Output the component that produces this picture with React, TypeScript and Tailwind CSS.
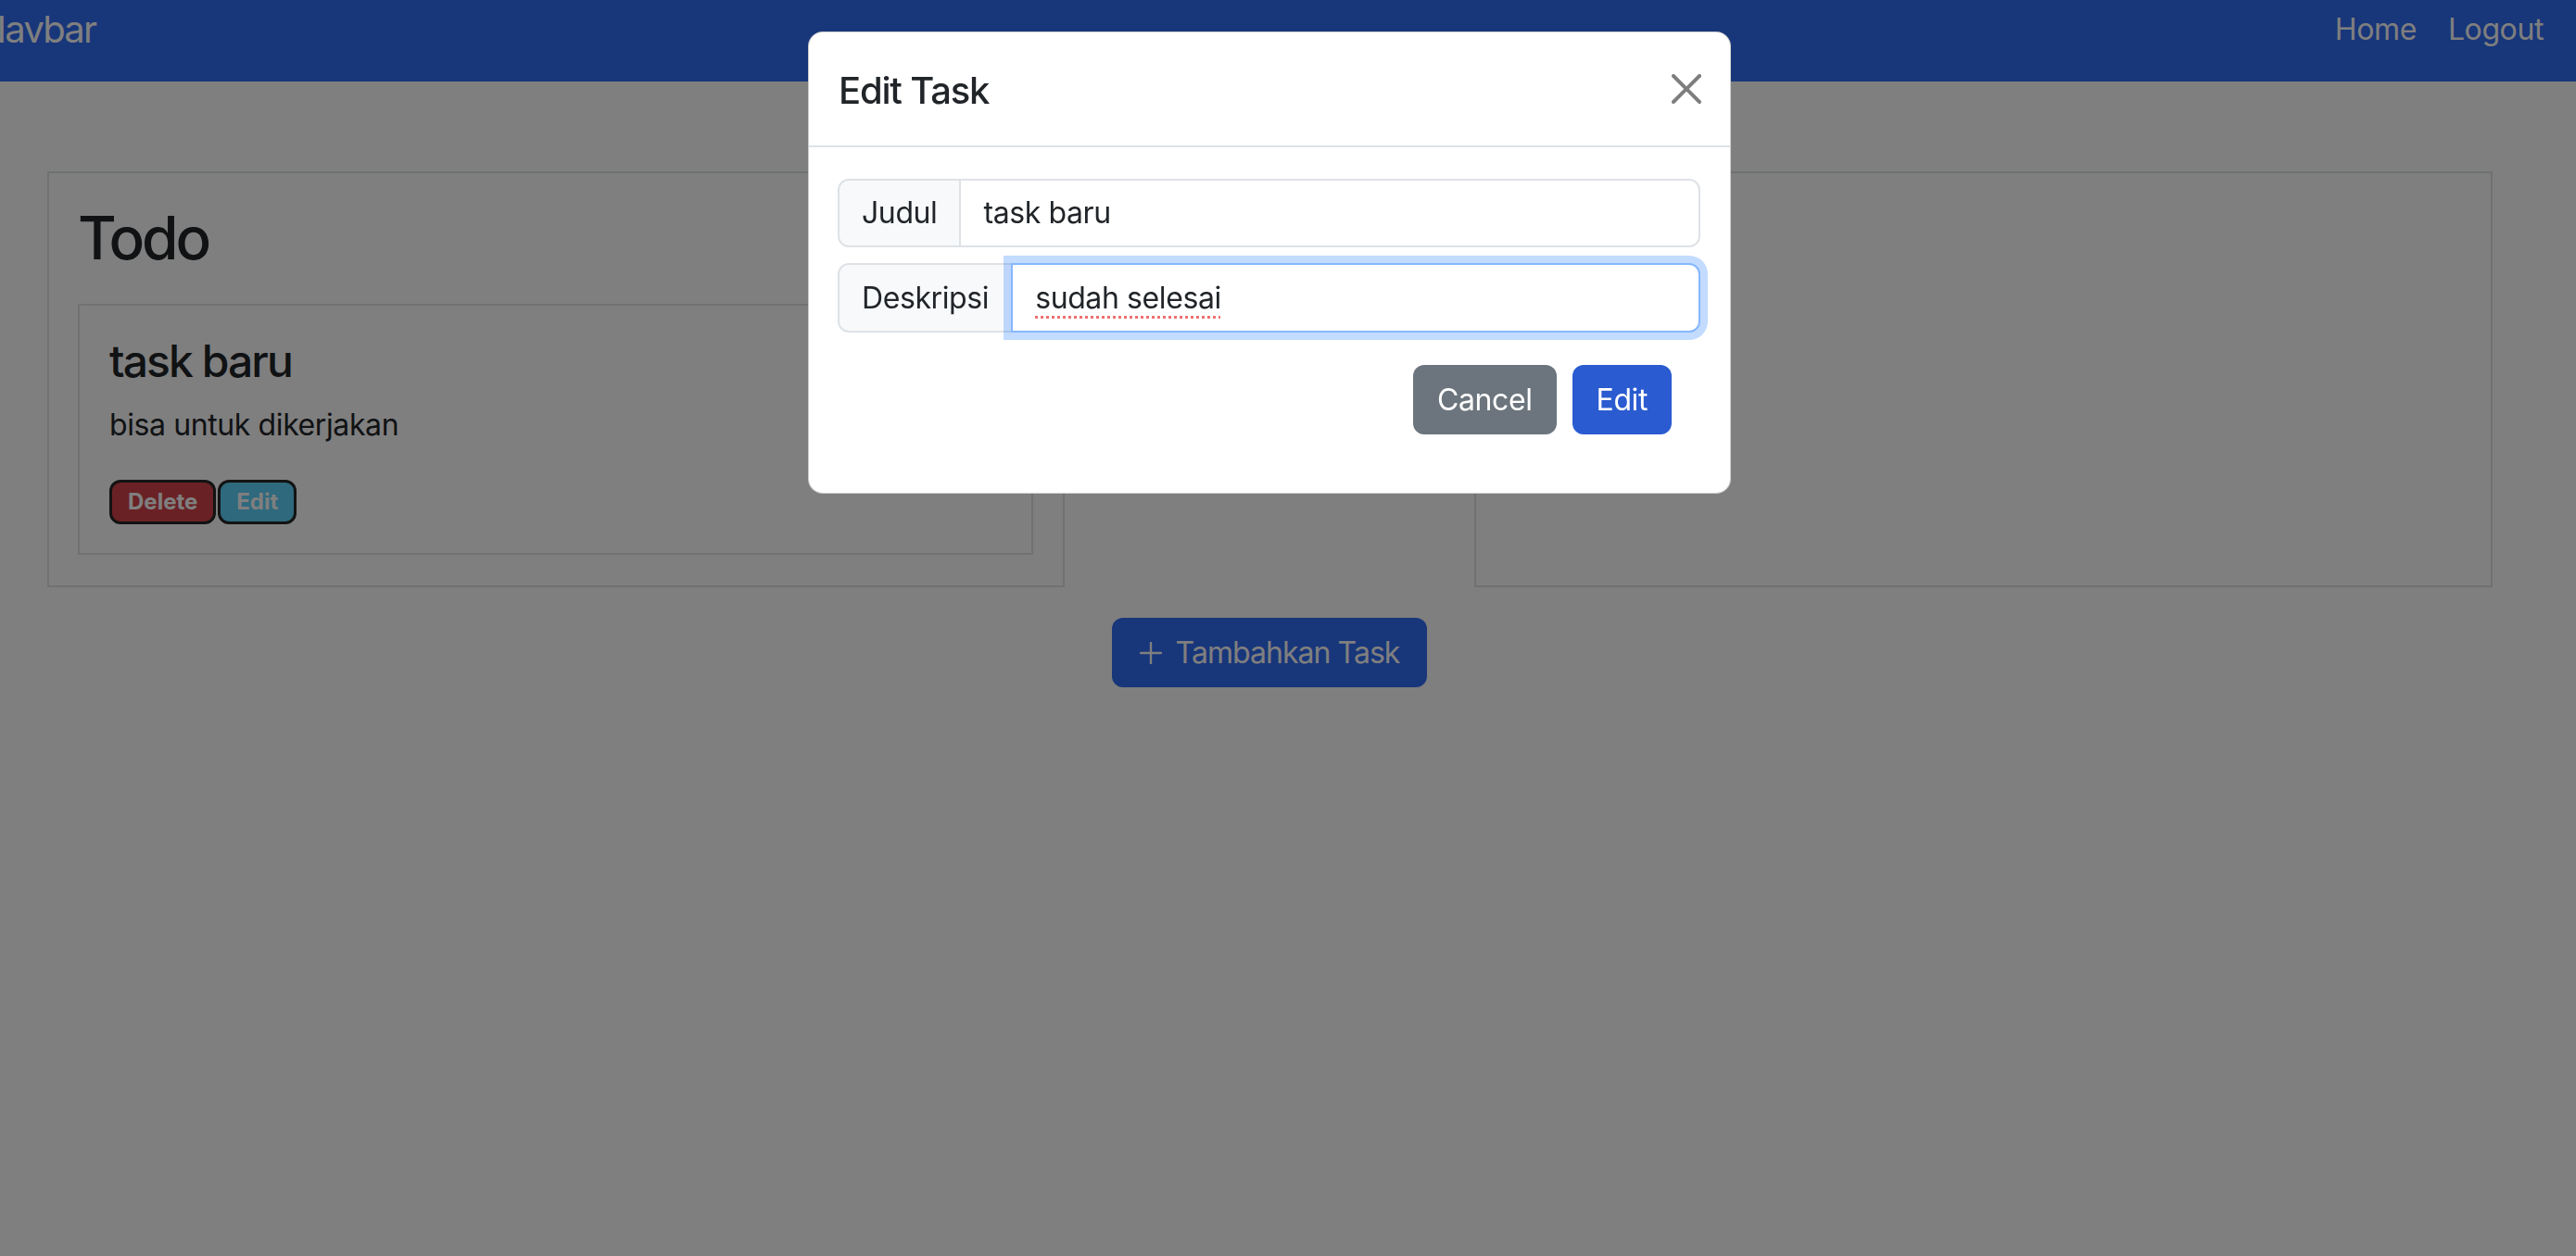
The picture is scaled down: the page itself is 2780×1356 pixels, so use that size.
import { useEffect, useRef, useState } from 'react';

function PlusIcon() {
  return (
    <svg viewBox="0 0 24 24" className="w-[24px] h-[24px]" fill="none" stroke="currentColor" strokeWidth={2.4} strokeLinecap="round">
      <path d="M12 1v22M1 12h22" />
    </svg>
  );
}

function CloseIcon() {
  return (
    <svg viewBox="0 0 16 16" className="w-[32px] h-[32px]" fill="#000">
      <path d="M.293.293a1 1 0 0 1 1.414 0L8 6.586 14.293.293a1 1 0 1 1 1.414 1.414L9.414 8l6.293 6.293a1 1 0 0 1-1.414 1.414L8 9.414l-6.293 6.293a1 1 0 0 1-1.414-1.414L6.586 8 .293 1.707a1 1 0 0 1 0-1.414" />
    </svg>
  );
}

export default function App() {
  const [title, setTitle] = useState('task baru');
  const [desc, setDesc] = useState('sudah selesai');
  const descRef = useRef<HTMLInputElement>(null);

  useEffect(() => {
    const el = descRef.current;
    if (!el) return;
    el.focus();
    el.setSelectionRange(el.value.length, el.value.length);
  }, []);

  return (
    <div className="relative min-h-screen overflow-hidden bg-white font-['Inter',sans-serif] tracking-[-0.025em] text-[#212529]">
      {/* Navbar */}
      <nav className="flex h-[88px] items-start justify-between bg-[#306cf4]">
        <a className="-ml-[23px] pt-[2px] text-[40px] leading-[60px] tracking-[-0.045em] text-white">Navbar</a>
        <div className="flex gap-[34px] pr-[35px] pt-[8px] text-[32px] leading-[48px] text-white">
          <a>Home</a>
          <a>Logout</a>
        </div>
      </nav>

      {/* Board */}
      <main className="w-[2740px] pt-[97px]">
        <div className="ml-[51px] mr-[50px] grid grid-cols-[1098px_1fr_1099px]">
          <section className="border-2 border-[#dee2e6] pl-[31px] pr-[32px] pt-[32px] pb-[33px]">
            <h2 className="mb-[32px] text-[64px] font-medium leading-[76.8px] tracking-[-0.05em]">Todo</h2>
            <div className="border-2 border-[#dee2e6] px-[32px] py-[31px]">
              <h4 className="mb-[17px] text-[48px] font-medium leading-[57.6px] tracking-[-0.04em]">task baru</h4>
              <p className="mb-[35px] text-[32px] leading-[48px]">bisa untuk dikerjakan</p>
              <div className="flex gap-[2px] tracking-normal">
                <button className="h-[48px] rounded-[12px] border-[3px] border-[#262626] bg-[#d4434a] px-[17px] text-[24px] font-bold text-white">
                  Delete
                </button>
                <button className="h-[48px] rounded-[12px] border-[3px] border-[#262626] bg-[#5cd3fb] px-[17px] text-[24px] font-bold text-white">
                  Edit
                </button>
              </div>
            </div>
          </section>
          <div />
          <section className="border-2 border-[#dee2e6]" />
        </div>

        <div className="mt-[33px] flex justify-center">
          <button className="flex h-[75px] items-center gap-[15px] rounded-[12px] bg-[#306cf4] px-[30px] text-[32px] tracking-[-0.03em] text-white">
            <PlusIcon />
            <span>Tambahkan Task</span>
          </button>
        </div>
      </main>

      {/* Backdrop */}
      <div className="fixed inset-0 bg-black/50" />

      {/* Modal */}
      <div className="fixed inset-0 flex justify-center pr-[40px] pt-[34px]">
        <div className="h-fit w-[996px] rounded-[16px] border border-black/20 bg-white">
          <div className="flex items-center justify-between border-b-2 border-[#dee2e6] pl-[32px] pr-[31px] pt-[33px] pb-[29px]">
            <h5 className="text-[40px] font-medium leading-[60px] tracking-[-0.03em]">Edit Task</h5>
            <button className="-mt-[4px] opacity-50">
              <CloseIcon />
            </button>
          </div>

          <div className="pl-[31px] pr-[32px] pt-[34px] pb-[63px]">
            <div className="flex h-[74px]">
              <span className="flex items-center rounded-l-[12px] border-2 border-[#dee2e6] bg-[#f8f9fa] px-[24px] text-[32px]">
                Judul
              </span>
              <input
                value={title}
                onChange={(e) => setTitle(e.target.value)}
                className="-ml-[2px] min-w-0 flex-1 rounded-r-[12px] border-2 border-[#dee2e6] bg-white px-[24px] text-[32px] text-[#212529] outline-none"
              />
            </div>
            <div className="mt-[17px] flex h-[75px]">
              <span className="flex items-center rounded-l-[12px] border-2 border-[#dee2e6] bg-[#f8f9fa] px-[24px] text-[32px]">
                Deskripsi
              </span>
              <input
                ref={descRef}
                value={desc}
                onChange={(e) => setDesc(e.target.value)}
                spellCheck
                className="relative z-10 -ml-[2px] min-w-0 flex-1 rounded-r-[12px] border-2 border-[#86b7fe] bg-white px-[24px] text-[32px] text-[#212529] caret-black underline decoration-[#f07070] decoration-dotted decoration-[3px] underline-offset-[8px] shadow-[0_0_0_8px_rgba(13,110,253,0.25)] outline-none"
              />
            </div>

            <div className="mt-[35px] flex justify-end gap-[17px] pr-[31px]">
              <button className="h-[75px] rounded-[12px] bg-[#6c757d] px-[26px] text-[32px] text-white">Cancel</button>
              <button className="h-[75px] rounded-[12px] bg-[#2a5bd0] px-[26px] text-[32px] text-white">Edit</button>
            </div>
          </div>
        </div>
      </div>
    </div>
  );
}
